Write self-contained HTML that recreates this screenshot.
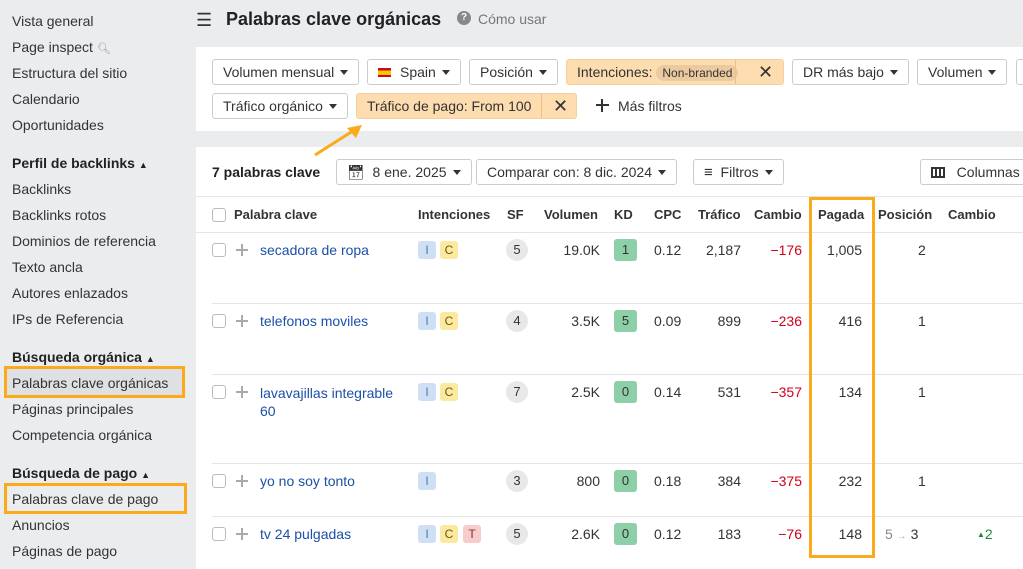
<!DOCTYPE html>
<html><head><meta charset="utf-8"><style>
*{box-sizing:border-box;margin:0;padding:0}
body{width:1023px;height:569px;overflow:hidden;background:#ebecee;font-family:"Liberation Sans",sans-serif;font-size:14px;color:#333;position:relative}
.a{position:absolute;white-space:nowrap}
.sb{font-size:14px;color:#333}
.sh{font-weight:bold;font-size:14px;color:#222}
.btn{position:absolute;height:26px;border:1px solid #ccc;border-radius:3px;background:#fff;line-height:24px;padding:0 10px;font-size:14px;color:#333;white-space:nowrap}
.car{display:inline-block;width:0;height:0;border-left:4px solid transparent;border-right:4px solid transparent;border-top:5px solid #333;vertical-align:middle;margin-left:6px;margin-top:-2px}
.or{background:#fddcb0;border-color:#f5cfa0}
.th{font-weight:bold;font-size:13px;color:#333;top:207px}
.cb{position:absolute;width:14px;height:14px;border:1px solid #bbb;border-radius:3px;background:#fff}
.pl{position:absolute;width:12px;height:12px}
.pl:before{content:"";position:absolute;left:5px;top:0;width:2px;height:12px;background:#aaa}
.pl:after{content:"";position:absolute;top:5px;left:0;height:2px;width:12px;background:#aaa}
.kw{color:#1c4fa8;font-size:14px}
.bd{position:absolute;width:18px;height:18px;border-radius:3px;font-size:12px;text-align:center;line-height:18px}
.bi{background:#cfe0f5;color:#4a77b3}.bc{background:#fbe9a0;color:#6a5a10}.bt{background:#f8cccc;color:#8a3030}
.sf{position:absolute;width:22px;height:22px;border-radius:50%;background:#e8e8e8;text-align:center;line-height:22px;font-size:13px}
.kd{position:absolute;width:23px;height:22px;border-radius:3px;background:#8dd0a8;text-align:center;line-height:22px;font-size:13px}
.r{text-align:right}
.red{color:#d0021b}
.ln{position:absolute;left:212px;right:0;height:1px;background:#e4e4e4}
</style></head><body>
<div class="a sb" style="left:12px;top:13px">Vista general</div>
<div class="a sb" style="left:12px;top:39px">Page inspect <span style="color:#999;font-size:11px">&#x1F50D;&#xFE0E;</span></div>
<div class="a sb" style="left:12px;top:65px">Estructura del sitio</div>
<div class="a sb" style="left:12px;top:91px">Calendario</div>
<div class="a sb" style="left:12px;top:117px">Oportunidades</div>
<div class="a sh" style="left:12px;top:155px">Perfil de backlinks <span style="font-size:9px">&#9650;</span></div>
<div class="a sb" style="left:12px;top:181px">Backlinks</div>
<div class="a sb" style="left:12px;top:207px">Backlinks rotos</div>
<div class="a sb" style="left:12px;top:233px">Dominios de referencia</div>
<div class="a sb" style="left:12px;top:259px">Texto ancla</div>
<div class="a sb" style="left:12px;top:285px">Autores enlazados</div>
<div class="a sb" style="left:12px;top:311px">IPs de Referencia</div>
<div class="a sh" style="left:12px;top:349px">Búsqueda orgánica <span style="font-size:9px">&#9650;</span></div>
<div class="a" style="left:4px;top:366px;width:181px;height:32px;border:3px solid #fbab19;background:#dfe0e3"></div>
<div class="a sb" style="left:12px;top:375px">Palabras clave orgánicas</div>
<div class="a sb" style="left:12px;top:401px">Páginas principales</div>
<div class="a sb" style="left:12px;top:427px">Competencia orgánica</div>
<div class="a sh" style="left:12px;top:465px">Búsqueda de pago <span style="font-size:9px">&#9650;</span></div>
<div class="a" style="left:4px;top:483px;width:183px;height:31px;border:3px solid #fbab19"></div>
<div class="a sb" style="left:12px;top:491px">Palabras clave de pago</div>
<div class="a sb" style="left:12px;top:517px">Anuncios</div>
<div class="a sb" style="left:12px;top:543px">Páginas de pago</div>

<div class="a" style="left:196px;top:10px;font-size:18px">&#9776;</div>
<div class="a" style="left:226px;top:9px;font-size:18px;font-weight:bold;color:#222">Palabras clave orgánicas</div>
<div class="a" style="left:457px;top:11px;width:14px;height:14px;border-radius:50%;background:#888;color:#fff;font-size:10px;font-weight:bold;text-align:center;line-height:14px">?</div>
<div class="a" style="left:478px;top:11px;color:#777;font-size:14px">Cómo usar</div>

<div class="a" style="left:196px;top:47px;width:827px;height:84px;background:#fff"></div>
<div class="btn" style="left:212px;top:59px">Volumen mensual<span class="car"></span></div>
<div class="btn" style="left:367px;top:59px"><span style="display:inline-block;width:13px;height:9px;background:linear-gradient(#c60b1e 25%,#ffc400 25%,#ffc400 75%,#c60b1e 75%);vertical-align:middle;margin-right:9px;margin-top:-2px"></span>Spain<span class="car"></span></div>
<div class="btn" style="left:469px;top:59px">Posición<span class="car"></span></div>
<div class="btn or" style="left:566px;top:59px;width:218px;padding-left:10px">Intenciones: <span style="background:#eccaa0;border-radius:10px;padding:1px 6px;font-size:12px">Non-branded</span><span style="position:absolute;left:168px;top:0;bottom:0;border-left:1px solid #eebf88"></span><span style="position:absolute;left:191px;top:0;font-size:18px">&#x2715;</span></div>
<div class="btn" style="left:792px;top:59px">DR más bajo<span class="car"></span></div>
<div class="btn" style="left:917px;top:59px">Volumen<span class="car"></span></div>
<div class="btn" style="left:1016px;top:59px;width:20px"></div>
<div class="btn" style="left:212px;top:93px">Tráfico orgánico<span class="car"></span></div>
<div class="btn or" style="left:356px;top:93px;width:221px">Tráfico de pago: From 100<span style="position:absolute;left:184px;top:0;bottom:0;border-left:1px solid #eebf88"></span><span style="position:absolute;left:196px;top:0;font-size:18px">&#x2715;</span></div>
<div class="a" style="left:596px;top:99px;width:13px;height:13px"><div style="position:absolute;left:5px;top:0;width:2px;height:13px;background:#333"></div><div style="position:absolute;left:0;top:5px;width:13px;height:2px;background:#333"></div></div>
<div class="a" style="left:618px;top:98px;font-size:14px">Más filtros</div>

<div class="a" style="left:196px;top:147px;width:827px;height:422px;background:#fff"></div>
<svg class="a" style="left:310px;top:120px" width="60" height="40"><path d="M5 35 L46 9" stroke="#fbab19" stroke-width="3"/><path d="M52 5 L37 8 L46 18 Z" fill="#fbab19"/></svg>
<div class="a" style="left:212px;top:164px;font-weight:bold;font-size:14px;color:#222">7 palabras clave</div>
<div class="btn" style="left:336px;top:159px">&#x1F4C5;&#xFE0E;&nbsp; 8 ene. 2025<span class="car"></span></div>
<div class="btn" style="left:476px;top:159px">Comparar con: 8 dic. 2024<span class="car"></span></div>
<div class="btn" style="left:693px;top:159px"><span style="font-size:15px">&#x2261;</span>&nbsp; Filtros<span class="car"></span></div>
<div class="btn" style="left:920px;top:159px;width:120px"><span style="display:inline-block;width:14px;height:11px;border:2px solid #333;background:linear-gradient(90deg,#fff 2px,#333 2px,#333 4px,#fff 4px,#fff 6px,#333 6px,#333 8px,#fff 8px);vertical-align:middle;margin-top:-2px"></span>&nbsp;&nbsp; Columnas</div>
<div class="a" style="left:196px;top:196px;width:827px;height:1px;background:#e4e4e4"></div>
<div class="a" style="left:196px;top:232px;width:827px;height:1px;background:#e4e4e4"></div>
<div class="cb" style="left:212px;top:208px"></div>
<div class="a th" style="left:234px">Palabra clave</div>
<div class="a th" style="left:418px">Intenciones</div>
<div class="a th" style="left:507px">SF</div>
<div class="a th" style="left:544px">Volumen</div>
<div class="a th" style="left:614px">KD</div>
<div class="a th" style="left:654px">CPC</div>
<div class="a th" style="left:698px">Tráfico</div>
<div class="a th" style="left:754px">Cambio</div>
<div class="a th" style="left:818px">Pagada</div>
<div class="a th" style="left:878px">Posición</div>
<div class="a th" style="left:948px">Cambio</div>

<div class="ln" style="top:303px"></div><div class="ln" style="top:374px"></div><div class="ln" style="top:463px"></div><div class="ln" style="top:516px"></div>

<div class="cb" style="left:212px;top:243px"></div><div class="pl" style="left:236px;top:244px"></div>
<div class="a kw" style="left:260px;top:242px">secadora de ropa</div>
<div class="bd bi" style="left:418px;top:241px">I</div><div class="bd bc" style="left:440px;top:241px">C</div>
<div class="sf" style="left:506px;top:239px">5</div>
<div class="a r" style="left:540px;top:242px;width:60px">19.0K</div>
<div class="kd" style="left:614px;top:239px">1</div>
<div class="a" style="left:654px;top:242px">0.12</div>
<div class="a r" style="left:690px;top:242px;width:51px">2,187</div>
<div class="a r red" style="left:752px;top:242px;width:50px">−176</div>
<div class="a r" style="left:812px;top:242px;width:50px">1,005</div>
<div class="a" style="left:918px;top:242px">2</div>

<div class="cb" style="left:212px;top:314px"></div><div class="pl" style="left:236px;top:315px"></div>
<div class="a kw" style="left:260px;top:313px">telefonos moviles</div>
<div class="bd bi" style="left:418px;top:312px">I</div><div class="bd bc" style="left:440px;top:312px">C</div>
<div class="sf" style="left:506px;top:310px">4</div>
<div class="a r" style="left:540px;top:313px;width:60px">3.5K</div>
<div class="kd" style="left:614px;top:310px">5</div>
<div class="a" style="left:654px;top:313px">0.09</div>
<div class="a r" style="left:690px;top:313px;width:51px">899</div>
<div class="a r red" style="left:752px;top:313px;width:50px">−236</div>
<div class="a r" style="left:812px;top:313px;width:50px">416</div>
<div class="a" style="left:918px;top:313px">1</div>

<div class="cb" style="left:212px;top:385px"></div><div class="pl" style="left:236px;top:386px"></div>
<div class="a kw" style="left:260px;top:384px;line-height:18px">lavavajillas integrable<br>60</div>
<div class="bd bi" style="left:418px;top:383px">I</div><div class="bd bc" style="left:440px;top:383px">C</div>
<div class="sf" style="left:506px;top:381px">7</div>
<div class="a r" style="left:540px;top:384px;width:60px">2.5K</div>
<div class="kd" style="left:614px;top:381px">0</div>
<div class="a" style="left:654px;top:384px">0.14</div>
<div class="a r" style="left:690px;top:384px;width:51px">531</div>
<div class="a r red" style="left:752px;top:384px;width:50px">−357</div>
<div class="a r" style="left:812px;top:384px;width:50px">134</div>
<div class="a" style="left:918px;top:384px">1</div>

<div class="cb" style="left:212px;top:474px"></div><div class="pl" style="left:236px;top:475px"></div>
<div class="a kw" style="left:260px;top:473px">yo no soy tonto</div>
<div class="bd bi" style="left:418px;top:472px">I</div>
<div class="sf" style="left:506px;top:470px">3</div>
<div class="a r" style="left:540px;top:473px;width:60px">800</div>
<div class="kd" style="left:614px;top:470px">0</div>
<div class="a" style="left:654px;top:473px">0.18</div>
<div class="a r" style="left:690px;top:473px;width:51px">384</div>
<div class="a r red" style="left:752px;top:473px;width:50px">−375</div>
<div class="a r" style="left:812px;top:473px;width:50px">232</div>
<div class="a" style="left:918px;top:473px">1</div>

<div class="cb" style="left:212px;top:527px"></div><div class="pl" style="left:236px;top:528px"></div>
<div class="a kw" style="left:260px;top:526px">tv 24 pulgadas</div>
<div class="bd bi" style="left:418px;top:525px">I</div><div class="bd bc" style="left:440px;top:525px">C</div><div class="bd bt" style="left:463px;top:525px">T</div>
<div class="sf" style="left:506px;top:523px">5</div>
<div class="a r" style="left:540px;top:526px;width:60px">2.6K</div>
<div class="kd" style="left:614px;top:523px">0</div>
<div class="a" style="left:654px;top:526px">0.12</div>
<div class="a r" style="left:690px;top:526px;width:51px">183</div>
<div class="a r red" style="left:752px;top:526px;width:50px">−76</div>
<div class="a r" style="left:812px;top:526px;width:50px">148</div>
<div class="a" style="left:885px;top:526px"><span style="color:#888">5</span> <span style="color:#aaa;font-size:10px">&#8594;</span> 3</div>
<div class="a" style="left:977px;top:526px;color:#1b8a3a"><span style="font-size:8px;vertical-align:2px">&#9650;</span>2</div>

<div class="a" style="left:809px;top:197px;width:66px;height:361px;border:3px solid #fbab19"></div>
</body></html>
